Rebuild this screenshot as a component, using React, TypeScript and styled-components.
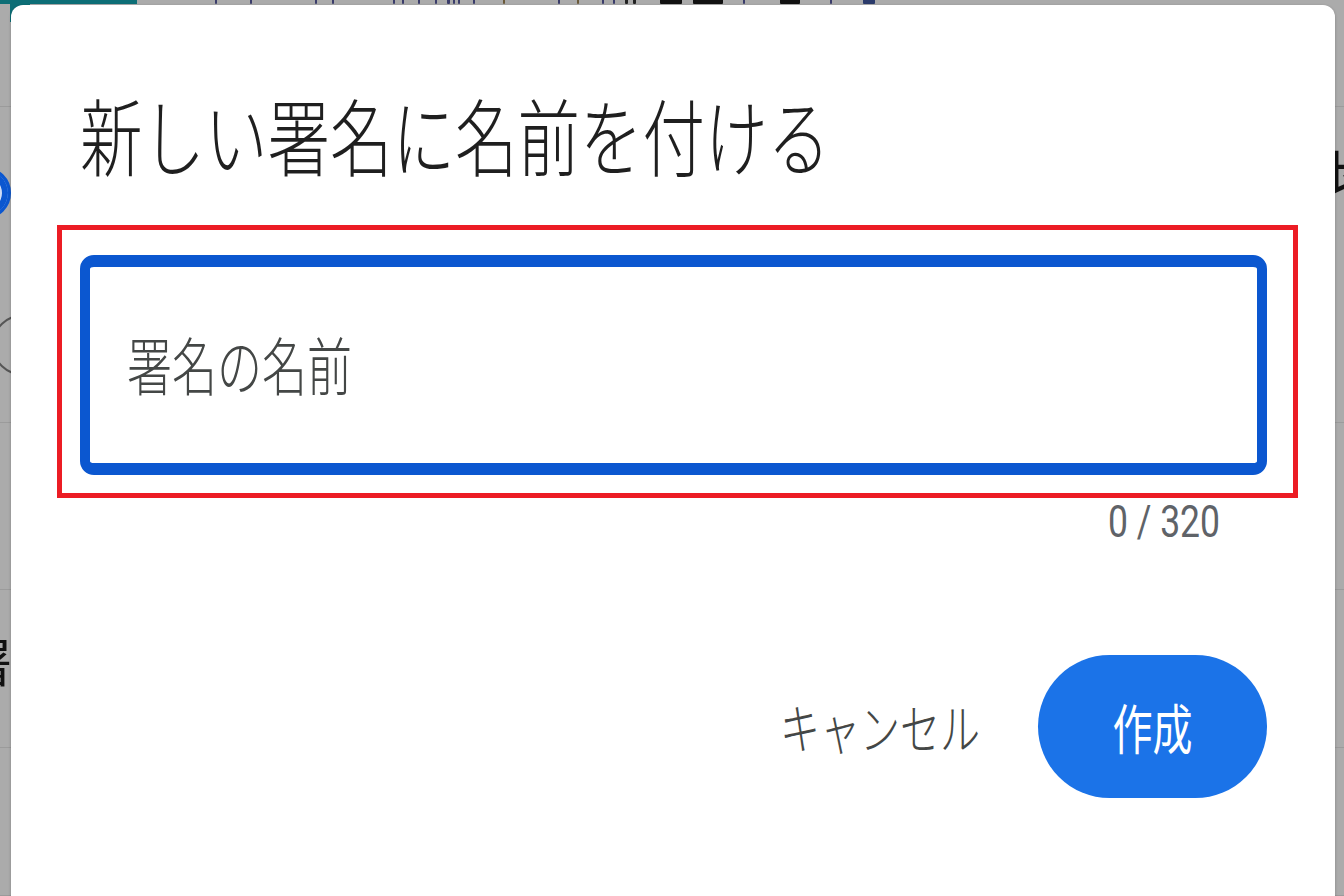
import React from "react";
import styled, { createGlobalStyle } from "styled-components";

const GlobalStyle = createGlobalStyle`
  html, body {
    margin: 0;
    padding: 0;
    width: 1344px;
    height: 896px;
    overflow: hidden;
    background: #ababab;
  }
  body {
    font-family: "Noto Sans CJK JP", "Noto Sans", sans-serif;
  }
  * { box-sizing: border-box; }
`;

const Screen = styled.div`
  position: relative;
  width: 1344px;
  height: 896px;
  overflow: hidden;
  background: #ababab;
`;

/* ---------- page behind the modal ---------- */
const Backdrop = styled.div`
  display: flex;
  flex-direction: column;
  height: 100%;
`;

const TopStrip = styled.div`
  flex: 0 0 5px;
  display: flex;
  align-items: flex-start;
`;

const TealTab = styled.div`
  width: 137px;
  height: 4px;
  background: #0d6e76;
`;

const Frag = styled.span<{ $w: number; $c: string; $gap: number }>`
  display: block;
  width: ${(p) => p.$w}px;
  margin-left: ${(p) => p.$gap}px;
  height: 4px;
  background: ${(p) => p.$c};
  border-radius: 0 0 1px 1px;
  flex-shrink: 0;
`;

const Row = styled.div<{ $h?: number }>`
  display: flex;
  justify-content: space-between;
  align-items: flex-start;
  border-bottom: 1px solid #9b9b9b;
  flex: ${(p) => (p.$h ? `0 0 ${p.$h}px` : "1 1 auto")};
`;

const PeekCol = styled.div`
  display: flex;
  flex-direction: column;
  align-items: flex-start;
`;

const CornerTeal = styled.div`
  width: 20px;
  height: 18px;
  margin: -1px 0 0 10px;
  background: #0d6e76;
`;

const BlueDisc = styled.div`
  width: 52px;
  height: 52px;
  margin: 60px 0 0 -41px;
  border-radius: 50%;
  background: #0b57d0;
  border: 3px solid #0b57d0;
  box-shadow: inset 0 0 0 6px #0b57d0, inset 0 0 0 9px #cfdcf5;
`;

const RingOutline = styled.div`
  width: 64px;
  height: 62px;
  margin: 95px 0 0 -8px;
  border-radius: 50%;
  border: 2px solid #555;
`;

const PeekText = styled.span<{ $size: number; $color: string; $top: number; $left: number }>`
  display: block;
  font-size: ${(p) => p.$size}px;
  line-height: 1;
  color: ${(p) => p.$color};
  margin-top: ${(p) => p.$top}px;
  margin-left: ${(p) => p.$left}px;
  margin-right: ${(p) => -p.$left}px;
  white-space: nowrap;
`;

/* ---------- modal ---------- */
const Dialog = styled.div`
  position: absolute;
  top: 5px;
  left: 11px;
  width: 1324px;
  height: 940px;
  background: #fff;
  border-radius: 12px;
  box-shadow: 0 1px 3px rgba(0, 0, 0, 0.25);
  display: flex;
  flex-direction: column;
  padding: 0 37px 0 46px;
`;

const Title = styled.h2`
  margin: 89px 0 0 23px;
  font-size: 62.5px;
  font-weight: 300;
  line-height: 80px;
  color: #1f1f1f;
  white-space: nowrap;
  transform: scaleY(1.35);
  transform-origin: 50% 50%;
`;

const Highlight = styled.div`
  margin-top: 51px;
  border: 5px solid #ec1c24;
  padding: 25px 26px 18px 18px;
`;

const Field = styled.div`
  height: 220px;
  border-style: solid;
  border-color: #0b57d0;
  border-width: 12px 10px;
  border-radius: 14px;
  display: flex;
  align-items: center;
  padding: 0 0 6px 37px;
`;

const Placeholder = styled.span`
  font-size: 45px;
  font-weight: 300;
  line-height: 1;
  color: #444746;
  transform: scaleY(1.4);
  transform-origin: 50% 50%;
`;

const CounterRow = styled.div`
  display: flex;
  justify-content: flex-end;
  margin-top: 6px;
  padding-right: 78px;
`;

const Counter = styled.span`
  font-family: Roboto, "Noto Sans", sans-serif;
  font-size: 35.5px;
  line-height: 36px;
  color: #5f6368;
  transform: scaleY(1.24);
  transform-origin: 50% 50%;
`;

const Actions = styled.div`
  display: flex;
  justify-content: flex-end;
  align-items: center;
  gap: 58px;
  margin-top: 115px;
  padding-right: 31px;
`;

const TextButton = styled.button`
  background: none;
  border: none;
  padding: 0;
  font-family: "Noto Sans CJK JP", sans-serif;
  font-size: 40px;
  font-weight: 300;
  line-height: 1;
  color: #444746;
  transform: scaleY(1.35);
  transform-origin: 50% 50%;
  cursor: pointer;
`;

const FilledButton = styled.button`
  width: 229px;
  height: 143px;
  border: none;
  border-radius: 72px;
  background: #1b73e8;
  display: flex;
  align-items: center;
  justify-content: center;
  cursor: pointer;
`;

const ButtonLabel = styled.span`
  font-family: "Noto Sans CJK JP", sans-serif;
  font-size: 40px;
  line-height: 1;
  color: #fff;
  transform: scaleY(1.35);
  transform-origin: 50% 50%;
`;

const fragments: Array<[number, number, string]> = [
  [78, 2, "#3b3d6b"],
  [33, 2, "#3b3d6b"],
  [63, 2, "#3b3d6b"],
  [15, 2, "#3b3d6b"],
  [59, 2, "#3b3d6b"],
  [7, 2, "#3b3d6b"],
  [14, 2, "#3b3d6b"],
  [15, 2, "#3b3d6b"],
  [10, 3, "#3b3d6b"],
  [3, 2, "#3b3d6b"],
  [3, 2, "#3b3d6b"],
  [13, 2, "#3b3d6b"],
  [28, 2, "#6b5a3a"],
  [53, 2, "#3b3d6b"],
  [17, 2, "#6b5a3a"],
  [23, 2, "#3b3d6b"],
  [9, 2, "#3b3d6b"],
  [10, 3, "#222"],
  [5, 3, "#222"],
  [24, 22, "#111"],
  [11, 30, "#111"],
  [20, 2, "#3b3d6b"],
  [35, 20, "#111"],
  [30, 2, "#3b3d6b"],
  [31, 12, "#2a3a6a"],
];

export default function App() {
  return (
    <Screen>
      <GlobalStyle />
      <Backdrop>
        <TopStrip>
          <TealTab />
          {fragments.map(([gap, w, c], i) => (
            <Frag key={i} $gap={gap} $w={w} $c={c} />
          ))}
        </TopStrip>
        <Row $h={102}>
          <CornerTeal />
        </Row>
        <Row $h={316}>
          <PeekCol>
            <BlueDisc />
            <RingOutline />
          </PeekCol>
          <PeekText $size={60} $color="#111" $top={38} $left={40}>
            地
          </PeekText>
        </Row>
        <Row $h={167}>
          <PeekText $size={44} $color="#2b3fb0" $top={60} $left={-22}>
            x
          </PeekText>
        </Row>
        <Row $h={158}>
          <PeekText $size={52} $color="#111" $top={44} $left={-40}>
            署
          </PeekText>
        </Row>
        <Row />
      </Backdrop>

      <Dialog role="dialog" aria-label="新しい署名に名前を付ける">
        <Title>新しい署名に名前を付ける</Title>
        <Highlight>
          <Field>
            <Placeholder>署名の名前</Placeholder>
          </Field>
        </Highlight>
        <CounterRow>
          <Counter>0 / 320</Counter>
        </CounterRow>
        <Actions>
          <TextButton>キャンセル</TextButton>
          <FilledButton>
            <ButtonLabel>作成</ButtonLabel>
          </FilledButton>
        </Actions>
      </Dialog>
    </Screen>
  );
}
